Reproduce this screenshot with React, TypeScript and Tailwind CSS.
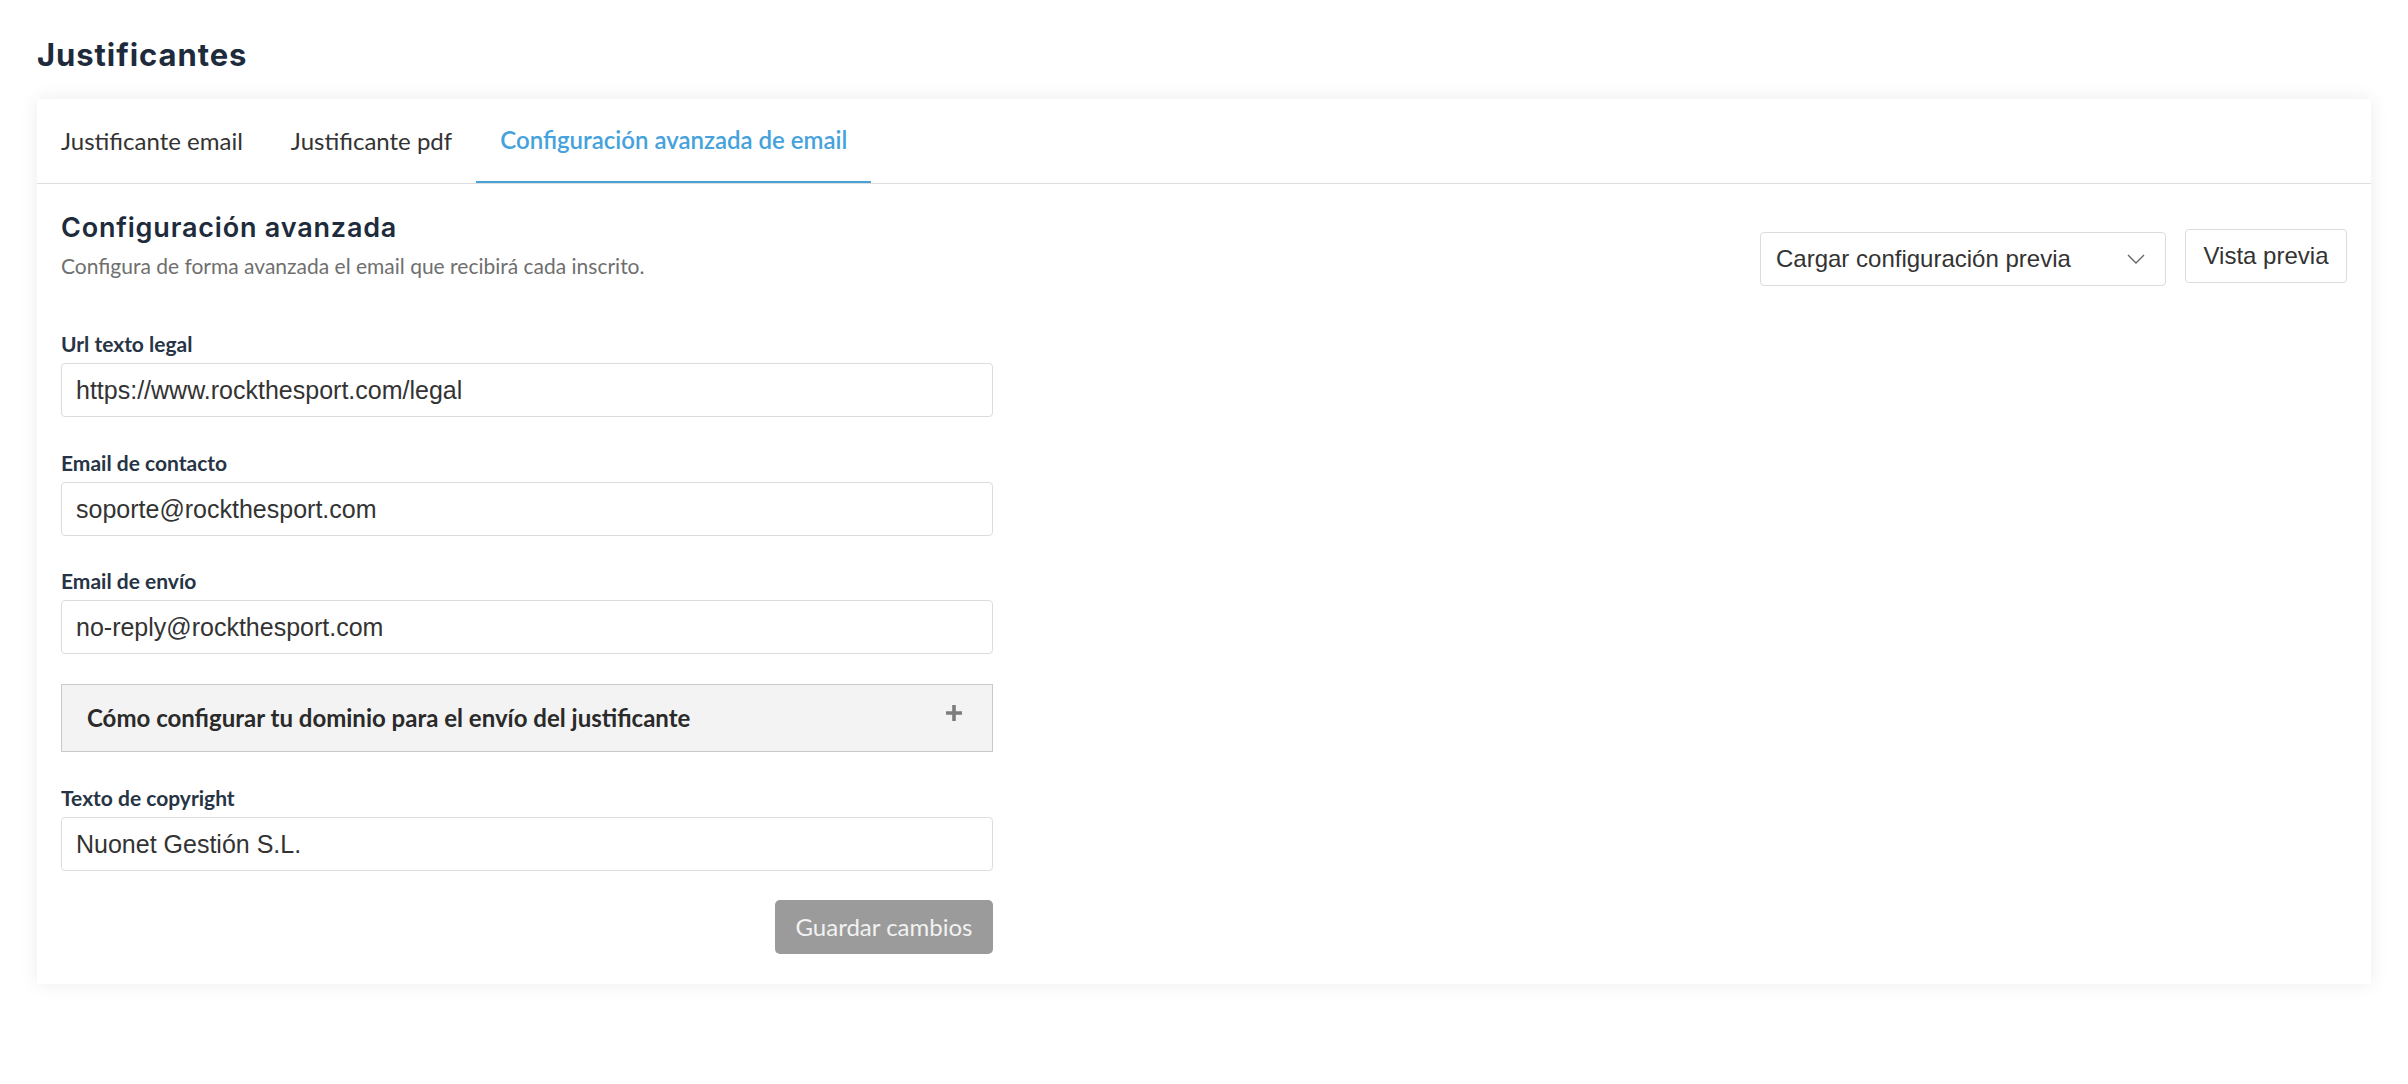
import React from "react";

const lato = { fontFamily: "Lato, 'Noto Sans', sans-serif" };

function Field({ label, value }: { label: string; value: string }) {
  return (
    <div>
      <label className="block text-[21px] font-bold leading-[24px] text-[#263445]" style={lato}>
        {label}
      </label>
      <input
        readOnly
        defaultValue={value}
        className="mt-[7px] block h-[54px] w-full rounded-[4px] border border-[#dcdcdc] bg-white px-[14px] text-[25px] text-[#333] outline-none font-['Liberation_Sans',Arial,sans-serif]"
      />
    </div>
  );
}

export default function App() {
  const tabs = ["Justificante email", "Justificante pdf", "Configuración avanzada de email"];
  const active = 2;

  return (
    <div className="min-h-screen bg-white px-[37px] pt-[35px]">
      <h1 className="text-[31px] font-bold leading-[40px] tracking-[0.03em] text-[#1e2b3c] font-['Inter',sans-serif]">
        Justificantes
      </h1>

      <div className="mt-[24px] bg-white pb-[30px] shadow-[0_0_18px_rgba(0,0,0,0.08)]">
        {/* tabs */}
        <div className="flex border-b border-[#dedede]" style={lato}>
          {tabs.map((t, i) => (
            <div
              key={t}
              className={
                i === active
                  ? "-mb-px flex h-[84px] items-center border-b-2 border-[#4a9fd5] px-6 text-[24px] font-semibold text-[#45a2dc]"
                  : "flex h-[84px] items-center px-6 text-[24px] text-[#333]"
              }
            >
              {t}
            </div>
          ))}
        </div>

        <div className="px-6 pt-[28px]">
          <div className="flex items-start justify-between">
            <div>
              <h2 className="text-[27px] font-semibold leading-[32px] tracking-[0.03em] text-[#1e2b3c] font-['Inter',sans-serif]">
                Configuración avanzada
              </h2>
              <p className="mt-[10px] text-[21px] leading-[24px] text-[#6f6f6f]" style={lato}>
                Configura de forma avanzada el email que recibirá cada inscrito.
              </p>
            </div>
            <div className="flex items-start gap-[19px] font-['Liberation_Sans',Arial,sans-serif] text-[24px] text-[#333]">
              <div className="mt-[20px] flex h-[54px] w-[406px] items-center justify-between rounded-[4px] border border-[#dcdcdc] pl-[15px] pr-[20px]">
                <span>Cargar configuración previa</span>
                <svg width="18" height="10" viewBox="0 0 18 10" fill="none">
                  <path d="M1 1l8 8 8-8" stroke="#666" strokeWidth="1.4" />
                </svg>
              </div>
              <button className="mt-[17px] h-[54px] w-[162px] rounded-[4px] border border-[#dcdcdc] bg-white text-[#333]">
                Vista previa
              </button>
            </div>
          </div>

          <div className="mt-[46px] flex w-[932px] flex-col">
            <Field label="Url texto legal" value="https://www.rockthesport.com/legal" />
            <div className="mt-[34px]">
              <Field label="Email de contacto" value="soporte@rockthesport.com" />
            </div>
            <div className="mt-[33px]">
              <Field label="Email de envío" value="no-reply@rockthesport.com" />
            </div>

            <div
              className="mt-[30px] flex h-[68px] items-center justify-between border border-[#c9c9c9] bg-[#f3f3f3] pl-[25px] pr-[30px]"
              style={lato}
            >
              <span className="text-[24px] font-bold text-[#2a2a2a]">
                Cómo configurar tu dominio para el envío del justificante
              </span>
              <svg width="16" height="16" viewBox="0 0 16 16" className="-mt-[10px]">
                <path d="M8 0v16M0 8h16" stroke="#7d7d7d" strokeWidth="3.6" />
              </svg>
            </div>

            <div className="mt-[34px]">
              <Field label="Texto de copyright" value="Nuonet Gestión S.L." />
            </div>

            <div className="mt-[29px] flex justify-end">
              <button
                className="h-[54px] w-[218px] rounded-[5px] bg-[#9b9b9b] text-[24px] text-[#f2f2f2]"
                style={lato}
              >
                Guardar cambios
              </button>
            </div>
          </div>
        </div>
      </div>
    </div>
  );
}
